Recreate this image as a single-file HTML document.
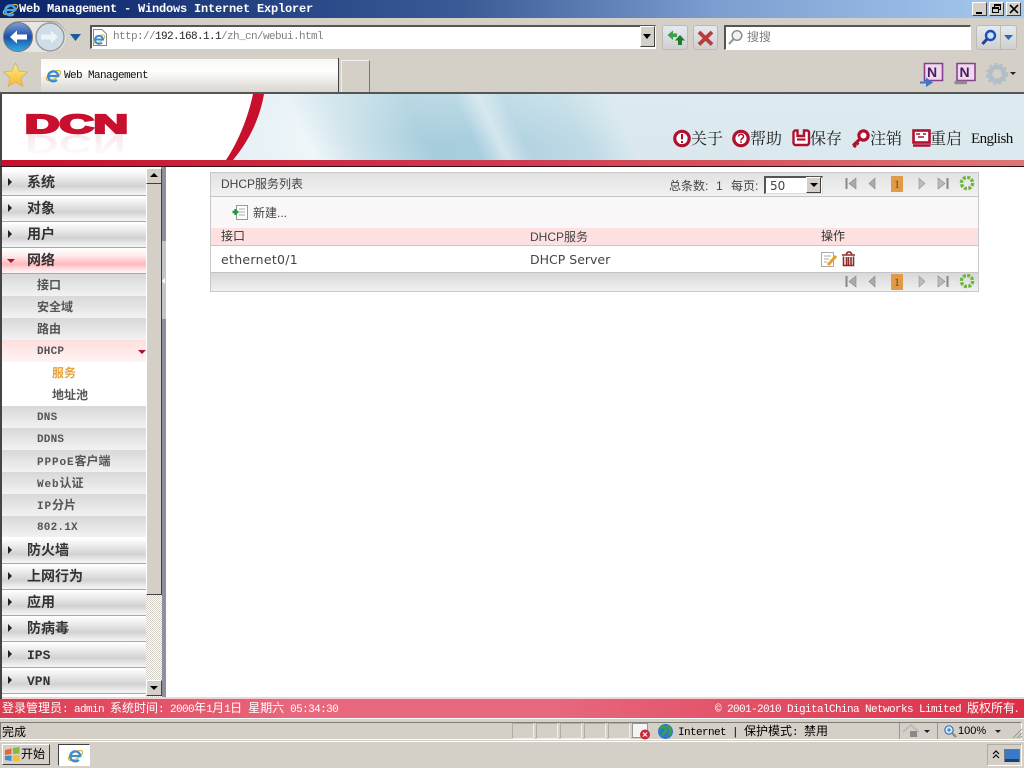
<!DOCTYPE html>
<html lang="zh-CN"><head><meta charset="utf-8"><title>Web Management - Windows Internet Explorer</title>
<style>
html,body{margin:0;padding:0;width:1024px;height:768px;overflow:hidden;background:#d4d0c8}
body{position:relative;font-family:"Liberation Mono","Noto Sans CJK SC",monospace;font-size:11px;color:#000}
.a{position:absolute}
.t{position:absolute;white-space:nowrap;line-height:14px}
.g{font-size:11px;letter-spacing:-.6px}
.c{font:12px/14px "Noto Sans CJK SC",sans-serif;letter-spacing:0}
svg{position:absolute;overflow:visible}
.m{position:absolute;left:2px;width:144px;height:26px;background:linear-gradient(#fff 0,#f0f0f0 25%,#d2d2d2 65%,#e8e8e8 85%,#f6f6f6 100%);border-bottom:1px solid #a8a8a8;box-sizing:border-box}
.m .l{position:absolute;left:25px;top:6px;font:14px/16px "Liberation Mono","Noto Sans CJK SC",monospace;font-weight:700;color:#333;white-space:nowrap}
.m i{position:absolute;left:6px;top:8px;border-left:4px solid #222;border-top:4px solid transparent;border-bottom:4px solid transparent}
.s{position:absolute;left:2px;width:144px;height:22px;background:linear-gradient(#d8d8d8,#f2f2f2);}
.s .l{position:absolute;left:35px;top:5px;font:12px/14px "Liberation Mono","Noto Sans CJK SC",monospace;font-weight:700;color:#555;white-space:nowrap}
.s .n{font-size:11px;letter-spacing:.2px}
.s .w{font-size:11px;letter-spacing:.9px}
.btn{position:absolute;background:linear-gradient(#e6e9ee,#cfd0d0);border:1px solid #bdbab2;border-radius:3px;box-sizing:border-box}
.p{position:absolute;font:12px/14px "Liberation Sans","Noto Sans CJK SC",sans-serif;color:#444;white-space:nowrap}
.d{font:12.5px/14px "DejaVu Sans",sans-serif}
.h{position:absolute;top:129px;font:16px/18px "Noto Serif CJK SC",serif;color:#222;white-space:nowrap}
.sb{position:absolute;top:723px;width:22px;height:16px;border:1px solid;border-color:#b0ada5 #f2f0ec #f2f0ec #b0ada5;box-sizing:border-box}
</style></head><body>

<!-- title bar -->
<div class="a" style="left:0;top:0;width:1024px;height:18px;background:linear-gradient(90deg,#0a246a 0,#3a5a96 45%,#7c9ed0 70%,#a6caf0 100%)"></div>
<svg style="left:2px;top:1px" width="17" height="17" viewBox="0 0 17 17"><ellipse cx="8.5" cy="8.5" rx="8" ry="3.4" fill="none" stroke="#e5b13a" stroke-width="1.2" transform="rotate(-30 8.5 8.5)"/><path d="M3.8 9H13.2A5 5 0 1 0 11.8 12.8" fill="none" stroke="#4aa4e0" stroke-width="2.3"/></svg>
<div class="t" style="left:19px;top:2px;color:#fff;font-size:12px;font-weight:700;letter-spacing:-.2px">Web Management - Windows Internet Explorer</div>
<div class="a" style="left:972px;top:2px;width:15px;height:14px;background:#d4d0c8;border:1px solid;border-color:#fff #404040 #404040 #fff;box-sizing:border-box"><div class="a" style="left:3px;top:9px;width:6px;height:2px;background:#000"></div></div>
<div class="a" style="left:989px;top:2px;width:15px;height:14px;background:#d4d0c8;border:1px solid;border-color:#fff #404040 #404040 #fff;box-sizing:border-box"><div class="a" style="left:4px;top:1px;width:7px;height:6px;border:1px solid #000;border-top-width:2px;box-sizing:border-box"></div><div class="a" style="left:2px;top:4px;width:7px;height:6px;background:#d4d0c8;border:1px solid #000;border-top-width:2px;box-sizing:border-box"></div></div>
<div class="a" style="left:1006px;top:2px;width:15px;height:14px;background:#d4d0c8;border:1px solid;border-color:#fff #404040 #404040 #fff;box-sizing:border-box"><svg style="left:2px;top:1px" width="10" height="10"><path d="M1 1L9 9M9 1L1 9" stroke="#000" stroke-width="1.6"/></svg></div>

<!-- nav buttons -->
<div class="a" style="left:4px;top:22px;width:62px;height:30px;border-radius:15px;background:#e8e6e2;box-shadow:0 -1px 0 #9a9a9a"></div>
<svg style="left:3px;top:21px" width="32" height="32" viewBox="0 0 32 32"><defs><linearGradient id="g1" x1="0" y1="0" x2="0" y2="1"><stop offset="0" stop-color="#7aa0d8"/><stop offset=".5" stop-color="#1d4fa8"/><stop offset="1" stop-color="#2fb0e8"/></linearGradient></defs><circle cx="15" cy="16" r="14.5" fill="url(#g1)" stroke="#777"/><path d="M7 16L14 9.5V13.5H24V18.5H14V22.5Z" fill="#fff"/></svg>
<svg style="left:35px;top:21px" width="32" height="32" viewBox="0 0 32 32"><circle cx="15" cy="16" r="14" fill="#cfdde8" stroke="#999" stroke-width="1.5"/><path d="M23 16L16 9.5V13.5H6V18.5H16V22.5Z" fill="#eef3f6"/></svg>
<svg style="left:69px;top:33px" width="13" height="9"><path d="M1 1H12L6.5 8Z" fill="#1f5a9a"/></svg>

<!-- address -->
<div class="a" style="left:90px;top:25px;width:566px;height:24px;background:#fff;border:1px solid;border-color:#555 #fff #fff #555;border-width:2px 1px 1px 2px;box-sizing:border-box"></div>
<svg style="left:92px;top:29px" width="16" height="17"><path d="M1.5 .5H10L14.5 5V16.5H1.5Z" fill="#fff" stroke="#888"/><ellipse cx="7" cy="10" rx="6.5" ry="2.8" fill="none" stroke="#e5b13a" transform="rotate(-30 7 10)"/><path d="M3 10.5H11A4 4 0 1 0 10 13.5" fill="none" stroke="#3a8ed0" stroke-width="1.9"/></svg>
<div class="t g" style="left:113px;top:30px;color:#808080">http://<span style="color:#222">192.168.1.1</span>/zh_cn/webui.html</div>
<div class="a" style="left:640px;top:26px;width:15px;height:21px;background:#d4d0c8;border:1px solid;border-color:#fff #404040 #404040 #fff;box-sizing:border-box"><div class="a" style="left:2px;top:7px;border-top:5px solid #000;border-left:4px solid transparent;border-right:4px solid transparent"></div></div>
<div class="btn" style="left:662px;top:25px;width:26px;height:25px"></div>
<svg style="left:665px;top:29px" width="20" height="17"><path d="M2.5 6L8 1.5V4.5H12V8H8V11Z" fill="#3aa046"/><path d="M15 6L20 11.5H17V16H13V11.5H10Z" fill="#1d7d2a"/></svg>
<div class="btn" style="left:693px;top:25px;width:25px;height:25px"></div>
<svg style="left:697px;top:30px" width="17" height="16"><path d="M2 2L15 14.5M15 2L2 14.5" fill="none" stroke="#bd3a3a" stroke-width="3.8"/></svg>
<div class="a" style="left:724px;top:25px;width:247px;height:25px;background:#fff;border:1px solid;border-color:#555 #fff #fff #555;border-width:2px 1px 1px 2px;box-sizing:border-box"></div>
<svg style="left:727px;top:29px" width="17" height="17"><circle cx="10" cy="6.5" r="4.8" fill="#eef3f8" stroke="#888" stroke-width="1.4"/><path d="M6.5 10L2 15" stroke="#998" stroke-width="2.2"/></svg>
<div class="t c" style="left:747px;top:30px;color:#808080">搜搜</div>
<div class="btn" style="left:976px;top:25px;width:41px;height:25px"></div>
<div class="a" style="left:1000px;top:26px;width:1px;height:23px;background:#bdbab2"></div>
<svg style="left:980px;top:29px" width="18" height="17"><circle cx="10.5" cy="6.5" r="4.5" fill="#cfe0f4" stroke="#1d4fb0" stroke-width="2.4"/><path d="M7 10L2.5 15" stroke="#1d3f98" stroke-width="3"/></svg>
<svg style="left:1004px;top:35px" width="10" height="6"><path d="M0 0H9L4.5 5Z" fill="#2a6ab0"/></svg>

<!-- favorites/tab row -->
<svg style="left:3px;top:62px" width="26" height="26" viewBox="0 0 26 26"><defs><linearGradient id="st" x1="0" y1="0" x2="0" y2="1"><stop offset="0" stop-color="#ffec90"/><stop offset="1" stop-color="#f8b820"/></linearGradient></defs><path d="M12.5 1L16 9L24.5 10L18 16L20 24.5L12.5 20L5 24.5L7 16L.5 10L9 9Z" fill="url(#st)" stroke="#c8b080" stroke-width=".8"/></svg>
<div class="a" style="left:41px;top:59px;width:297px;height:33px;background:linear-gradient(#f8f7f4,#fff 35%,#d9d6cf);"></div>
<div class="a" style="left:338px;top:58px;width:1px;height:34px;background:#444"></div>
<div class="a" style="left:341px;top:60px;width:29px;height:32px;border:1px solid #777;border-bottom:0;box-sizing:border-box;border-left-color:#f0efec;border-top-color:#f0efec"></div>
<svg style="left:45px;top:67px" width="17" height="17"><ellipse cx="8.5" cy="8.5" rx="8" ry="3.4" fill="none" stroke="#e5b13a" stroke-width="1.2" transform="rotate(-30 8.5 8.5)"/><path d="M3.8 9H13.2A5 5 0 1 0 11.8 12.8" fill="none" stroke="#3a8ed0" stroke-width="2.3"/></svg>
<div class="t g" style="left:64px;top:69px;color:#111">Web Management</div>
<svg style="left:920px;top:62px" width="24" height="25"><path d="M4.5 1.5H22.5V18.5H4.5Z" fill="#efd9ee" stroke="#8a3f8e" stroke-width="1.6"/><text x="7" y="15" font-family="Liberation Sans,sans-serif" font-size="14" font-weight="700" fill="#4a1a5e">N</text><path d="M0 19.5H6V15.5L13 20.5L6 25V21.5H0Z" fill="#3d78c8"/></svg>
<svg style="left:954px;top:62px" width="24" height="25"><path d="M3 1.5H21V18.5H3Z" fill="#efd9ee" stroke="#8a3f8e" stroke-width="1.6"/><text x="5.5" y="15" font-family="Liberation Sans,sans-serif" font-size="14" font-weight="700" fill="#4a1a5e">N</text><path d="M.5 20.5H13" stroke="#8b8b8b" stroke-width="3.4"/></svg>
<svg style="left:986px;top:63px" width="22" height="22"><circle cx="11" cy="11" r="7" fill="none" stroke="#b0bec8" stroke-width="4.5"/><circle cx="11" cy="11" r="10" fill="none" stroke="#b4c0ca" stroke-width="2.4" stroke-dasharray="3 2.5"/></svg>
<svg style="left:1010px;top:72px" width="7" height="4"><path d="M0 0H6L3 3Z" fill="#222"/></svg>

<!-- page -->
<div class="a" style="left:0;top:92px;width:1024px;height:2px;background:#555"></div>
<div class="a" style="left:0;top:94px;width:2px;height:625px;background:#444"></div>
<div class="a" style="left:2px;top:94px;width:1022px;height:604px;background:#fff"></div>

<!-- header -->
<div class="a" style="left:226px;top:94px;width:798px;height:66px;background:linear-gradient(rgba(225,238,243,.35),rgba(225,238,243,0) 70%),linear-gradient(65deg,#e4eff4 0,#eef6f9 11%,#d0e4ec 16%,#a8cede 25%,#a9cfdf 31%,#d4e6ee 34%,#b4d4e2 37%,#bedae6 44%,#dbe9ef 50%,#dce9ef 100%)"></div>
<svg style="left:222px;top:94px" width="60" height="67"><path d="M0 0H31C26 24 16 48 4 66H0Z" fill="#fff"/><path d="M42 0H31C26 24 16 48 4 66H11C27 47 38 24 42 0Z" fill="#c8102e"/></svg>
<svg style="left:22px;top:112px" width="108" height="46"><defs><linearGradient id="rf" x1="0" y1="0" x2="0" y2="1"><stop offset="0" stop-color="#fff"/><stop offset="1" stop-color="#f8e2e6"/></linearGradient></defs><text x="3" y="0" transform="matrix(1 0 0 -1 0 23)" font-family="Liberation Sans,sans-serif" font-size="26" font-weight="700" fill="url(#rf)" textLength="101" lengthAdjust="spacingAndGlyphs">DCN</text><text x="3" y="21" font-family="Liberation Sans,sans-serif" font-size="26" font-weight="700" fill="#c8102e" stroke="#c8102e" stroke-width="2.2" textLength="103" lengthAdjust="spacingAndGlyphs">DCN</text></svg>

<svg style="left:673px;top:129px" width="19" height="19"><circle cx="9" cy="9.5" r="7.2" fill="#fff" stroke="#b01030" stroke-width="3.2"/><path d="M9 5V10.5M9 12V14" stroke="#b01030" stroke-width="2"/></svg>
<div class="h" style="left:691px">关于</div>
<svg style="left:732px;top:129px" width="19" height="19"><circle cx="9" cy="9.5" r="7.2" fill="#fff" stroke="#b01030" stroke-width="3.2"/><path d="M6.5 7.5C6.5 4.5 11.5 4.5 11.5 7.5C11.5 9.5 9 9 9 11.5M9 12.3V14" fill="none" stroke="#b01030" stroke-width="1.5"/></svg>
<div class="h" style="left:750px">帮助</div>
<svg style="left:792px;top:129px" width="19" height="19"><path d="M1.5 3.5A2 2 0 0 1 3.5 1.5H5.5V7H12V1.5H15A2 2 0 0 1 17 3.5V14A2 2 0 0 1 15 16H3.5A2 2 0 0 1 1.5 14Z" fill="#fff" stroke="#b01030" stroke-width="2.4"/><path d="M5 10.5H13.5" stroke="#b01030" stroke-width="2.2"/></svg>
<div class="h" style="left:810px">保存</div>
<svg style="left:851px;top:129px" width="20" height="19"><circle cx="12.5" cy="6.5" r="4.6" fill="#fff" stroke="#b01030" stroke-width="3.2"/><path d="M9 10L2 16.5M2.5 16L5 18M5 13.5L7.5 15.5" stroke="#b01030" stroke-width="3" fill="none"/></svg>
<div class="h" style="left:870px">注销</div>
<svg style="left:912px;top:129px" width="20" height="19"><rect x="1.5" y="1.5" width="16" height="12" fill="#fff" stroke="#b01030" stroke-width="2.6"/><path d="M1 16.5H18.5" stroke="#b01030" stroke-width="2.6"/><path d="M4 5H8M11 5H14M6 8H12" stroke="#b01030" stroke-width="1.4"/></svg>
<div class="h" style="left:930px">重启</div>
<div class="t" style="left:971px;top:131px;font:15px/16px 'Liberation Serif',serif;color:#111;letter-spacing:-.6px">English</div>

<div class="a" style="left:2px;top:160px;width:1022px;height:6px;background:linear-gradient(90deg,#c8102e 0,#cf3a4e 50%,#dd7575 100%)"></div>
<div class="a" style="left:0;top:166px;width:1024px;height:1px;background:#3a1018"></div>

<!-- sidebar menu -->
<div class="a" style="left:2px;top:167px;width:144px;height:530px;background:#fff"></div>
<div class="m" style="top:170px"><i></i><span class="l">系统</span></div>
<div class="m" style="top:196px"><i></i><span class="l">对象</span></div>
<div class="m" style="top:222px"><i></i><span class="l">用户</span></div>
<div class="m" style="top:248px;background:linear-gradient(#fff 0,#ffecec 30%,#ffb8be 65%,#ffe2e4 85%,#fdf4f4 100%)"><i style="left:5px;top:11px;border:4px solid transparent;border-top:4px solid #b01030;border-bottom:0"></i><span class="l">网络</span></div>
<div class="s" style="top:274px"><span class="l">接口</span></div>
<div class="s" style="top:296px"><span class="l">安全域</span></div>
<div class="s" style="top:318px"><span class="l">路由</span></div>
<div class="s" style="top:340px;background:linear-gradient(#ffdede,#fff3f3)"><span class="l n">DHCP</span><div class="a" style="left:136px;top:10px;border:4px solid transparent;border-top:4px solid #b01030;border-bottom:0"></div></div>
<div class="t" style="left:52px;top:366px;font:700 12px/14px 'Noto Sans CJK SC',sans-serif;color:#e8a23c">服务</div>
<div class="t" style="left:52px;top:388px;font:700 12px/14px 'Noto Sans CJK SC',sans-serif;color:#555">地址池</div>
<div class="s" style="top:406px"><span class="l n">DNS</span></div>
<div class="s" style="top:428px"><span class="l n">DDNS</span></div>
<div class="s" style="top:450px"><span class="l w">PPPoE<span style="font-size:12px;letter-spacing:0">客户端</span></span></div>
<div class="s" style="top:472px"><span class="l w">Web<span style="font-size:12px;letter-spacing:0">认证</span></span></div>
<div class="s" style="top:494px"><span class="l w">IP<span style="font-size:12px;letter-spacing:0">分片</span></span></div>
<div class="s" style="top:516px;height:21px"><span class="l n">802.1X</span></div>
<div class="m" style="top:538px"><i></i><span class="l">防火墙</span></div>
<div class="m" style="top:564px"><i></i><span class="l">上网行为</span></div>
<div class="m" style="top:590px"><i></i><span class="l">应用</span></div>
<div class="m" style="top:616px"><i></i><span class="l">防病毒</span></div>
<div class="m" style="top:642px"><i></i><span class="l" style="font-size:13px">IPS</span></div>
<div class="m" style="top:668px"><i></i><span class="l" style="font-size:13px">VPN</span></div>

<!-- scrollbar -->
<div class="a" style="left:146px;top:167px;width:16px;height:530px;background:repeating-conic-gradient(#d4d0c8 0 25%,#fff 0 50%) 0 0/2px 2px"></div>
<div class="a" style="left:146px;top:167px;width:16px;height:428px;background:#d4d0c8;border:1px solid;border-color:#fff #404040 #404040 #fff;box-sizing:border-box"></div>
<div class="a" style="left:146px;top:168px;width:16px;height:16px;background:#d4d0c8;border:1px solid;border-color:#fff #404040 #404040 #fff;box-sizing:border-box"><div class="a" style="left:3px;top:4px;border-bottom:4px solid #000;border-left:4px solid transparent;border-right:4px solid transparent"></div></div>
<div class="a" style="left:146px;top:680px;width:16px;height:16px;background:#d4d0c8;border:1px solid;border-color:#fff #404040 #404040 #fff;box-sizing:border-box"><div class="a" style="left:3px;top:5px;border-top:4px solid #000;border-left:4px solid transparent;border-right:4px solid transparent"></div></div>
<!-- splitter -->
<div class="a" style="left:162px;top:167px;width:4px;height:530px;background:#8e8e9c"></div>
<div class="a" style="left:162px;top:241px;width:4px;height:78px;background:#c4c4c8"></div>
<div class="a" style="left:162px;top:278px;border-right:3px solid #fff;border-top:3px solid transparent;border-bottom:3px solid transparent"></div>

<!-- table panel -->
<div class="a" style="left:210px;top:172px;width:769px;height:120px;border:1px solid #c8c8c8;box-sizing:border-box;background:#fff"></div>
<div class="a" style="left:211px;top:173px;width:767px;height:24px;background:linear-gradient(#e2e2e2,#f2f2f2);border-bottom:1px solid #c4c4c4;box-sizing:border-box"></div>
<div class="a" style="left:211px;top:197px;width:767px;height:31px;background:#f9f7f7"></div>
<div class="a" style="left:211px;top:228px;width:767px;height:18px;background:#fde0e0;border-bottom:1px solid #c8c8c8;box-sizing:border-box"></div>
<div class="a" style="left:211px;top:272px;width:767px;height:19px;background:linear-gradient(#d8d8d8,#f0f0f0);border-top:1px solid #c4c4c4;box-sizing:border-box"></div>

<div class="p" style="left:221px;top:177px">DHCP服务列表</div>
<div class="p" style="left:669px;top:179px">总条数:</div>
<div class="p" style="left:716px;top:179px">1</div>
<div class="p" style="left:731px;top:179px">每页:</div>
<div class="a" style="left:764px;top:176px;width:59px;height:18px;background:#fff;border:1px solid;border-color:#555 #ddd #ddd #555;border-width:2px 1px 1px 2px;box-sizing:border-box"></div>
<div class="p d" style="left:770px;top:179px;font-size:12px">50</div>
<div class="a" style="left:806px;top:177px;width:15px;height:16px;background:#d4d0c8;border:1px solid;border-color:#fff #404040 #404040 #fff;box-sizing:border-box"><div class="a" style="left:3px;top:5px;border-top:4px solid #000;border-left:4px solid transparent;border-right:4px solid transparent"></div></div>

<svg style="left:845px;top:176px" width="130" height="16"><path d="M1.5 2V13" stroke="#888" stroke-width="2"/><path d="M11 2V13L4 7.5Z" fill="#aaa" stroke="#888" stroke-width=".6"/><path d="M30 2V13L24 7.5Z" fill="#aaa" stroke="#888" stroke-width=".6"/><rect x="46" y="0" width="12" height="16" fill="#e09a48"/><text x="49" y="12" font-family="Liberation Serif,serif" font-size="12" fill="#6a4a20">1</text><path d="M74 2V13L80 7.5Z" fill="#bbb" stroke="#999" stroke-width=".6"/><path d="M93 2V13L100 7.5Z" fill="#bbb" stroke="#888" stroke-width=".6"/><path d="M102.5 2V13" stroke="#888" stroke-width="2"/><circle cx="122" cy="7" r="5.6" fill="none" stroke="#6cb63a" stroke-width="3.4" stroke-dasharray="3 1.4"/></svg>
<svg style="left:845px;top:274px" width="130" height="16"><path d="M1.5 2V13" stroke="#888" stroke-width="2"/><path d="M11 2V13L4 7.5Z" fill="#aaa" stroke="#888" stroke-width=".6"/><path d="M30 2V13L24 7.5Z" fill="#aaa" stroke="#888" stroke-width=".6"/><rect x="46" y="0" width="12" height="16" fill="#e09a48"/><text x="49" y="12" font-family="Liberation Serif,serif" font-size="12" fill="#6a4a20">1</text><path d="M74 2V13L80 7.5Z" fill="#bbb" stroke="#999" stroke-width=".6"/><path d="M93 2V13L100 7.5Z" fill="#bbb" stroke="#888" stroke-width=".6"/><path d="M102.5 2V13" stroke="#888" stroke-width="2"/><circle cx="122" cy="7" r="5.6" fill="none" stroke="#6cb63a" stroke-width="3.4" stroke-dasharray="3 1.4"/></svg>

<svg style="left:232px;top:205px" width="17" height="16"><rect x="4.5" y=".5" width="11" height="14" fill="#fff" stroke="#999"/><path d="M7 4H13M7 7H13M7 10H13" stroke="#aaa"/><path d="M3.5 4V10M.5 7H6.5" stroke="#1a9a3a" stroke-width="2.4"/></svg>
<div class="p" style="left:253px;top:206px">新建...</div>
<div class="p" style="left:221px;top:229px;color:#333">接口</div>
<div class="p" style="left:530px;top:230px;color:#444">DHCP服务</div>
<div class="p" style="left:821px;top:229px;color:#333">操作</div>
<div class="p d" style="left:221px;top:253px;color:#444;letter-spacing:.3px">ethernet0/1</div>
<div class="p d" style="left:530px;top:253px;color:#444">DHCP Server</div>
<svg style="left:821px;top:251px" width="17" height="17"><rect x=".5" y="1.5" width="12" height="14" fill="#fff" stroke="#aaa"/><path d="M3 5H10M3 8H8M3 11H6" stroke="#aaa"/><path d="M7 14L15 5" stroke="#e8a020" stroke-width="3"/></svg>
<svg style="left:841px;top:251px" width="15" height="16"><path d="M1 4H14M5 3L7 1H9L11 3" stroke="#8c2b2b" stroke-width="1.6" fill="none"/><path d="M2.5 5.5V14.5H12.5V5.5M5.5 6V14M7.5 6V14M10 6V14" stroke="#8c2b2b" stroke-width="1.6" fill="none"/></svg>

<!-- footer -->
<div class="a" style="left:2px;top:697px;width:1022px;height:2px;background:#f4d0d8"></div>
<div class="a" style="left:0;top:699px;width:1024px;height:19px;background:linear-gradient(90deg,#dd3b50 0,#e7677c 28%,#e7677c 55%,#e0485e 80%,#dc2e46 100%)"></div>
<div class="t g" style="left:2px;top:701px;color:#fff"><span class="c">登录管理员</span>: admin <span class="c">系统时间</span>: 2000<span class="c">年</span>1<span class="c">月</span>1<span class="c">日</span> <span class="c">星期六</span> 05:34:30</div>
<div class="t g" style="left:715px;top:701px;color:#fff">© 2001-2010 DigitalChina Networks Limited <span class="c">版权所有.</span></div>

<!-- status bar -->
<div class="a" style="left:0;top:718px;width:1024px;height:1px;background:#fff"></div>
<div class="a" style="left:0;top:722px;width:1022px;height:18px;border:1px solid;border-color:#807d76 #fff #fff #807d76;box-sizing:border-box"></div>
<div class="t c" style="left:2px;top:725px">完成</div>
<div class="sb" style="left:512px"></div><div class="sb" style="left:536px"></div><div class="sb" style="left:560px"></div><div class="sb" style="left:584px"></div><div class="sb" style="left:608px"></div>
<svg style="left:632px;top:723px" width="20" height="17"><rect x=".5" y=".5" width="15" height="14" fill="#f4f4f4" stroke="#999"/><circle cx="13" cy="11.5" r="5" fill="#c8283a"/><path d="M11 9.5L15 13.5M15 9.5L11 13.5" stroke="#fff" stroke-width="1.2"/></svg>
<svg style="left:657px;top:723px" width="17" height="17"><circle cx="8.5" cy="8.5" r="7.5" fill="#2a7ac8"/><path d="M3 5C6 3 9 4 9 7S5 10 5 13M10 2C13 5 15 8 12 12" stroke="#3aa04a" stroke-width="2.6" fill="none"/></svg>
<div class="t g" style="left:678px;top:724px">Internet | <span class="c">保护模式</span>: <span class="c">禁用</span></div>
<div class="a" style="left:899px;top:723px;width:1px;height:16px;background:#9a978f"></div>
<svg style="left:902px;top:724px" width="20" height="14"><path d="M1 8L9 1L17 8" fill="none" stroke="#bbb" stroke-width="2"/><rect x="8" y="7" width="7" height="6" fill="#8a8a8a"/></svg>
<svg style="left:924px;top:730px" width="7" height="4"><path d="M0 0H6L3 3Z" fill="#222"/></svg>
<div class="a" style="left:937px;top:723px;width:1px;height:16px;background:#9a978f"></div>
<svg style="left:943px;top:724px" width="14" height="14"><circle cx="6" cy="6" r="4.2" fill="#d8e8f8" stroke="#3a78b8" stroke-width="1.2"/><path d="M9 9L13 13" stroke="#887" stroke-width="2"/><path d="M4 6H8M6 4V8" stroke="#2a6ab0"/></svg>
<div class="t" style="left:958px;top:724px;font:11px/14px 'Liberation Sans',sans-serif">100%</div>
<svg style="left:995px;top:730px" width="7" height="4"><path d="M0 0H6L3 3Z" fill="#222"/></svg>
<svg style="left:1012px;top:728px" width="11" height="11"><path d="M10 1L1 10M10 5L5 10M10 8L8 10" stroke="#999" stroke-width="1"/></svg>

<!-- taskbar -->
<div class="a" style="left:0;top:741px;width:1024px;height:27px;background:#d4d0c8;border-top:1px solid #fff;box-sizing:border-box"></div>
<div class="a" style="left:2px;top:744px;width:48px;height:21px;background:#d4d0c8;border:1px solid;border-color:#fff #404040 #404040 #fff;box-sizing:border-box"></div>
<svg style="left:4px;top:746px" width="17" height="17"><path d="M1 4L7.5 2.5V8L1 9Z" fill="#e86a2a"/><path d="M9 2L15.5 1V7.5L9 8Z" fill="#8ab83a"/><path d="M1 10L7.5 9.5V15L1 14Z" fill="#3a8ed0"/><path d="M9 9.5L15.5 9V15.5L9 15Z" fill="#f0c030"/></svg>
<div class="t c" style="left:21px;top:747px">开始</div>
<div class="a" style="left:58px;top:744px;width:32px;height:22px;background:#fff;border:1px solid;border-color:#404040 #fff #fff #404040;box-sizing:border-box"></div>
<svg style="left:67px;top:747px" width="17" height="17"><ellipse cx="8.5" cy="8.5" rx="8" ry="3.4" fill="none" stroke="#e5b13a" stroke-width="1.2" transform="rotate(-30 8.5 8.5)"/><path d="M3.8 9H13.2A5 5 0 1 0 11.8 12.8" fill="none" stroke="#3a8ed0" stroke-width="2.3"/></svg>
<div class="a" style="left:987px;top:744px;width:35px;height:22px;border:1px solid;border-color:#b0ada5 #fff #fff #b0ada5;box-sizing:border-box"></div>
<svg style="left:992px;top:750px" width="8" height="9"><path d="M1 4L4 1L7 4M1 8L4 5L7 8" fill="none" stroke="#000" stroke-width="1.2"/></svg>
<svg style="left:1004px;top:749px" width="16" height="15"><rect x=".5" y=".5" width="15" height="12" fill="#3a78c8" stroke="#777"/><path d="M1 10H15V13H1Z" fill="#1d3f78"/></svg>
</body></html>
